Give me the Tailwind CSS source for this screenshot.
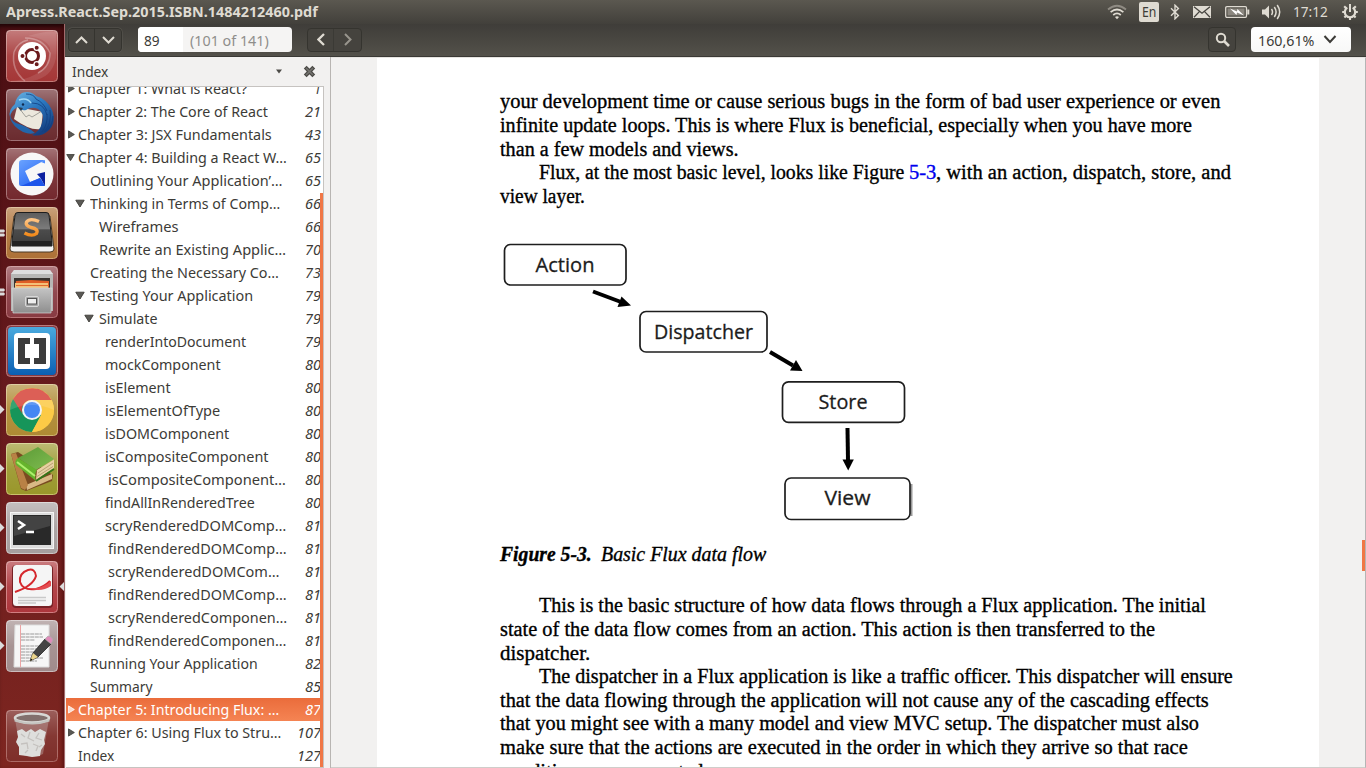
<!DOCTYPE html>
<html lang="en">
<head>
<meta charset="utf-8">
<title>Apress.React.Sep.2015.ISBN.1484212460.pdf</title>
<script src="https://cdn.jsdelivr.net/npm/@tailwindcss/browser@4"></script>
</head>
<body class="w-[1366px] h-[768px] overflow-hidden flex flex-col bg-[#f2f1f0] font-['Noto_Sans',sans-serif] text-[#3c3b37]">

<!-- top panel -->
<header class="h-[24px] shrink-0 flex items-center justify-between bg-linear-to-b from-[#5b5850] to-[#42403b] text-[#dfdbd2] pl-[6px] pr-[7px]">
  <div class="w-[320px] h-[24px] leading-[23px] text-[14px] font-bold whitespace-nowrap"><span class="inline-block origin-left" data-w="312">Apress.React.Sep.2015.ISBN.1484212460.pdf</span></div>
  <div class="flex items-center h-[24px]">
    <svg width="20" height="16" viewBox="0 0 20 16" fill="none" stroke="#dfdbd2" stroke-width="1.7"><path d="M1 5.5Q10-2 19 5.5" stroke="#8f8b83"/><path d="M3.6 8.2Q10 2.8 16.4 8.2"/><path d="M6.2 11Q10 7.6 13.8 11"/><path d="M8 13Q10 11.4 12 13L10 15.2Z" fill="#dfdbd2" stroke="none"/></svg>
    <div class="ml-[12px] w-[20px] h-[20px] rounded-[2px] bg-[#dfdbd2] text-[#3c3b37] text-[14px] leading-[20px] text-center flex justify-center"><span class="inline-block origin-center" data-w="14">En</span></div>
    <svg class="ml-[11px]" width="10" height="16" viewBox="0 0 10 16" fill="none" stroke="#dfdbd2" stroke-width="1.4"><path d="M1 4.2l7.4 7.2L5 14.8V1.2l3.4 3.4L1 11.8"/></svg>
    <svg class="ml-[13px]" width="18" height="12" viewBox="0 0 18 12"><path d="M0 0h18v12H0z" fill="#dfdbd2"/><path d="M1 .8l8 6.4 8-6.4M1 11.2l5.4-5.6M17 11.2l-5.4-5.6" fill="none" stroke="#45433e" stroke-width="1.3"/></svg>
    <svg class="ml-[14px]" width="25" height="12" viewBox="0 0 25 12"><rect x=".7" y=".7" width="20.8" height="10.6" rx="1.2" fill="none" stroke="#dfdbd2" stroke-width="1.3"/><rect x="2.5" y="2.5" width="17" height="7" fill="#8b877f"/><path d="M22.3 3.5h2v5h-2z" fill="#dfdbd2"/><path d="M5 2.5l7 3 .4-2.5L19 9.5l-7-3-.5 2.5z" fill="#fff"/></svg>
    <svg class="ml-[11px]" width="21" height="18" viewBox="0 0 21 18"><path d="M1 6.5h3l4-4v13l-4-4H1z" fill="#dfdbd2"/><path d="M10.5 6q2 3 0 6M13.3 4q3.6 5 0 10M16.2 2q5 7 0 14" fill="none" stroke="#dfdbd2" stroke-width="1.5"/></svg>
    <div class="ml-[11px] w-[36px] h-[24px] text-[14px] leading-[23px] whitespace-nowrap"><span class="inline-block origin-left" data-w="35">17:12</span></div>
    <svg class="ml-[12px]" width="18" height="18" viewBox="0 0 18 18" fill="none" stroke="#dfdbd2"><path d="M6.3 4.6a5.2 5.2 0 1 0 5.4 0" stroke-width="2.2"/><path d="M9 1v8" stroke-width="2"/><path d="M9 14v3M1.2 9h2.5M14.3 9h2.5M3.2 3.2l2 2M14.8 3.2l-2 2M3.4 14.6l2-2M14.6 14.6l-2-2" stroke-width="2.1"/></svg>
  </div>
</header>

<div class="flex h-[744px]">
  <!-- launcher -->
  <nav class="w-[65px] shrink-0 h-full flex flex-col gap-[7px] pt-[6px] pl-[6px] pb-[6px] border-r border-[#a36a6c] bg-linear-to-b from-[#4a0e12] via-[#671a1d] via-50% to-[#7e2620] shadow-[inset_-3px_0_4px_-2px_rgba(60,0,0,.55),inset_0_5px_5px_-3px_rgba(0,0,0,.7)]">
    <svg class="shrink-0" width="52" height="52" viewBox="0 0 52 52"><defs><linearGradient id="tile" x2="0" y2="1"><stop stop-color="#fff" stop-opacity=".38"/><stop offset=".5" stop-color="#fff" stop-opacity=".12"/><stop offset="1" stop-color="#fff" stop-opacity=".05"/></linearGradient></defs>
      <rect x=".5" y=".5" width="51" height="51" rx="4" fill="#a02c2c" stroke="#c07673"/><rect width="52" height="52" rx="4" fill="url(#tile)"/>
      <path d="M3 51Q18 51 30 44Q46 34 44 18Q40 8 22 6Q42 0 50 2V28Q46 48 26 51z" fill="#fff" opacity=".1"/><path d="M19 8q18 0 25 15q0 14-12 20M8 22q-3 18 11 29M8 22q4-10 14-12" fill="none" stroke="#fff" opacity=".3" stroke-width="1.5"/>
      <circle cx="26" cy="26" r="14" fill="#fff"/><circle cx="26" cy="26" r="6.5" fill="none" stroke="#6b1a1c" stroke-width="3"/><g stroke="#fff" stroke-width="1.2"><circle cx="16.500" cy="26" r="2.600" fill="#6b1a1c"/><circle cx="30.700" cy="17.800" r="2.600" fill="#6b1a1c"/><circle cx="30.700" cy="34.200" r="2.600" fill="#6b1a1c"/></g></svg>

    <svg class="shrink-0" width="52" height="52" viewBox="0 0 52 52"><defs><linearGradient id="bird" x2=".6" y2="1"><stop stop-color="#6eb8e6"/><stop offset=".5" stop-color="#2b78c0"/><stop offset="1" stop-color="#164182"/></linearGradient></defs>
      <rect x=".5" y=".5" width="51" height="51" rx="4" fill="#632024" stroke="#99686c"/><rect width="52" height="52" rx="4" fill="url(#tile)"/>
      <path d="M11 18L37 23L35 40Q24 42 8 30z" fill="#ece8dd"/><path d="M13 19l7 9 3-2 3 2 10-6" fill="none" stroke="#9b9a93" stroke-width=".9"/>
      <path d="M4 21Q3 31 10 34Q21 37 29 44Q24 46 17 43Q7 38 4 29z" fill="#2366ab"/>
      <path d="M16 4Q24 1 30 7Q41 10 46 21Q51 34 42 42Q35 48 26 46Q34 42 36 34Q39 24 32 20Q26 17 20 21Q15 22 12 18Q5 21 4 28Q2 21 9 15Q10 8 16 4z" fill="url(#bird)"/>
      <path d="M20 5q8 0 10 5q8 4 11 12M26 14q12 0 15 12M44 21q2 14-6 22M47 27q0 10-8 16M41 25q1 10-5 18" fill="none" stroke="#123f80" stroke-width=".8"/><path d="M13 11q8-3 12 3" fill="none" stroke="#a5daf5" stroke-width="1.500"/><circle cx="17" cy="15.500" r="1.200" fill="#10294f"/><path d="M12 18l3 4 2-3z" fill="#2b3f55"/></svg>

    <svg class="shrink-0" width="52" height="52" viewBox="0 0 52 52"><defs><linearGradient id="gb" x2=".7" y2="1"><stop stop-color="#6ba3ff"/><stop offset="1" stop-color="#2767f4"/></linearGradient></defs><rect x=".5" y=".5" width="51" height="51" rx="4" fill="#6c1d22" stroke="#a06a6d"/><rect width="52" height="52" rx="4" fill="url(#tile)"/><circle cx="26" cy="26" r="21.500" fill="#f7f7f7"/><path d="M16 12H39L19 23L24 34L34 30L39 38H15Q13 38 13 36V15Q13 12 16 12z" fill="url(#gb)"/><path d="M39 12v3.500L35 14z" fill="#4d8cff"/><path d="M31 26L39 24V38L34.500 30z" fill="#0b1f9f"/><path d="M15 38L34 30L39 38z" fill="#1d55ea"/></svg>

    <svg class="shrink-0" width="52" height="52" viewBox="0 0 52 52"><defs><linearGradient id="sb" x2="0" y2="1"><stop stop-color="#5c5c5c"/><stop offset=".48" stop-color="#7b7b7b"/><stop offset=".52" stop-color="#4c4c4c"/><stop offset="1" stop-color="#3b3b3b"/></linearGradient><linearGradient id="so" x2="0" y2="1"><stop stop-color="#ffc483"/><stop offset="1" stop-color="#f28a1b"/></linearGradient></defs><rect x=".5" y=".5" width="51" height="51" rx="4" fill="#a9692c" stroke="#cf9c68"/><rect width="52" height="52" rx="4" fill="url(#tile)"/><path d="M8 9L4 42Q4 45 8 45H44Q48 45 48 42L44 9z" fill="#f1f1f1" stroke="#4b3925"/><path d="M9 8Q9 5.500 12 5.500H40Q43 5.500 43 8L46 34V39H6V34z" fill="url(#sb)" stroke="#1d1d1d"/><path d="M6 34H46V39H6z" fill="#222"/><path d="M33 14.500Q24 10.500 20.500 15Q19 18.500 25 20.500Q33 22 30.500 26.500Q26 30 18.500 26" fill="none" stroke="url(#so)" stroke-width="3.400"/></svg>

    <svg class="shrink-0" width="52" height="52" viewBox="0 0 52 52"><defs><linearGradient id="cab" x2="0" y2="1"><stop stop-color="#c4c4c4"/><stop offset="1" stop-color="#8e8e8e"/></linearGradient></defs><rect x=".5" y=".5" width="51" height="51" rx="4" fill="#823038" stroke="#b3686c"/><rect width="52" height="52" rx="4" fill="url(#tile)"/><path d="M8 4H44L47 8V45H5V8z" fill="#b7b7b5"/><path d="M8 4H44L47 8H5z" fill="#dedede"/><path d="M8 12H44V22H8z" fill="#38332f"/><path d="M10 15l15-1 18 1v7H9z" fill="#df5d25"/><path d="M9 17h33v5H9z" fill="#f3c079"/><path d="M10 19h33v1H10z" fill="#e36a2c"/><path d="M6 22H46L45 47H7z" fill="url(#cab)" stroke="#d6d6d6" stroke-width=".7"/><rect x="19.500" y="30.500" width="13" height="10" rx="1.500" fill="#a5a5a5" stroke="#d8d8d8"/><rect x="21.500" y="32.500" width="9" height="5.500" fill="#eee" stroke="#555"/></svg>

    <svg class="shrink-0" width="52" height="52" viewBox="0 0 52 52"><defs><linearGradient id="br" x2="0" y2="1"><stop stop-color="#4aaade"/><stop offset="1" stop-color="#0b5fb3"/></linearGradient></defs><rect x=".5" y=".5" width="51" height="51" rx="4" fill="#8a3c44" stroke="#b87a7c"/><rect x="2" y="2" width="48" height="48" rx="4" fill="url(#br)"/><rect x="8" y="8" width="36" height="36" rx="4" fill="#fff"/><path d="M12 13h12v6h-5v14h5v6H12zM40 13H28v6h5v14h-5v6h12z" fill="#3c3c3c"/></svg>

    <svg class="shrink-0" width="52" height="52" viewBox="0 0 52 52"><rect x=".5" y=".5" width="51" height="51" rx="4" fill="#aa8328" stroke="#cdb06a"/><rect width="52" height="52" rx="4" fill="url(#tile)"/><circle cx="26" cy="26" r="22" fill="#fbc944"/><path d="M26 26L7 15A22 22 0 0 0 26 48L35 31z" fill="#16955a"/><path d="M7 15A22 22 0 0 1 45.500 16H26A10 10 0 0 0 16.500 30z" fill="#d7453b"/><path d="M26 48A22 22 0 0 0 45.500 16H26L35.500 31z" fill="#fcca46"/><circle cx="26" cy="26" r="10" fill="#f3f3f3"/><circle cx="26" cy="26" r="8" fill="#4587f3"/><path d="M4 26A22 22 0 0 1 48 26Q26 16 4 26" fill="#fff" opacity=".14"/></svg>

    <svg class="shrink-0" width="52" height="52" viewBox="0 0 52 52"><defs><linearGradient id="book" x2="1" y2="1"><stop stop-color="#5c9a36"/><stop offset="1" stop-color="#7fbc50"/></linearGradient></defs><rect x=".5" y=".5" width="51" height="51" rx="4" fill="#94911f" stroke="#c5bf62"/><rect width="52" height="52" rx="4" fill="url(#tile)"/><path d="M5 11L12 9L47 32L46 38L20 48L15 46z" fill="#7a4b21"/><path d="M20 42L46 31V36L21 47z" fill="#d9b985"/><path d="M5 11L10 10L22 42L19 47L15 45z" fill="#b98145"/><path d="M12 15L32 4L48 16L30 27z" fill="url(#book)"/><path d="M12 15Q8 18 10 22L30 38Q28 31 31 27z" fill="#65b32d"/><path d="M11 19l18 14" stroke="#aef06c" stroke-width="2.200"/><path d="M31 27L48 16.500V25L30 37z" fill="#e6d1a3"/><path d="M32 30l15-10M31 33.500l16-10" stroke="#ad9266" stroke-width=".8"/><path d="M30 38L48 26" stroke="#347719" stroke-width="1.800"/></svg>

    <svg class="shrink-0" width="52" height="52" viewBox="0 0 52 52"><rect x=".5" y=".5" width="51" height="51" rx="4" fill="#a19999" stroke="#c9c3c3"/><rect width="52" height="52" rx="4" fill="url(#tile)"/><rect x="4.500" y="10.500" width="43" height="36" fill="#ddd" stroke="#f5f5f5"/><rect x="7" y="13" width="38" height="30" fill="#292929"/><path d="M8 14H44V24L8 34z" fill="#555" opacity=".6"/><path d="M12 19l6 4-6 4M20 30h8" fill="none" stroke="#fff" stroke-width="2.500"/></svg>

    <svg class="shrink-0" width="52" height="52" viewBox="0 0 52 52"><rect x=".5" y=".5" width="51" height="51" rx="4" fill="#a92b31" stroke="#cf777a"/><rect width="52" height="52" rx="4" fill="url(#tile)"/><rect x="6" y="4" width="41" height="43" rx="4" fill="#772125"/><rect x="7" y="4" width="39" height="41" rx="3.500" fill="#f5f5f5"/><path d="M9 31Q27 25 30 15Q29 7 22 9Q13 12 14 21Q17 30 30 28Q38 26 44 20" fill="none" stroke="#d5282d" stroke-width="2"/><path d="M22 27Q35 29 45 20V25Q35 32 22 27" fill="#e44b50"/><path d="M12 36.500h28M12 39.500h28M12 42h18" stroke="#c9c9c9" stroke-width="1.300"/></svg>

    <svg class="shrink-0" width="52" height="52" viewBox="0 0 52 52"><rect x=".5" y=".5" width="51" height="51" rx="4" fill="#9b8585" stroke="#c8b9ba"/><rect width="52" height="52" rx="4" fill="url(#tile)"/><path d="M9 5H43V47H8z" fill="#f6f6f6" stroke="#ddd"/><path d="M14.500 5v42" stroke="#eca4a4"/><path d="M15 14h21M15 17h22M15 20h14M15 26h22M15 29h19M15 32h21M15 35h18M15 38h22M15 41h16" stroke="#9a9a9a" stroke-width="1" stroke-dasharray="4 .6"/><path d="M24 41L27 33L39 19L45 24L32 37z" fill="#444" stroke="#222" stroke-width=".8"/><path d="M24 41L27 33L32 37z" fill="#ead48b"/><path d="M39 19L42 16Q46 16 47 20L45 24z" fill="#df8cb9" stroke="#aaa" stroke-width=".7"/><path d="M24 41l1-2.500 1.500 1z" fill="#111"/></svg>

    <svg class="shrink-0 mt-auto" width="52" height="52" viewBox="0 0 52 52"><rect x=".5" y=".5" width="51" height="51" rx="4" fill="#792621" stroke="#a9645f"/><rect width="52" height="52" rx="4" fill="url(#tile)" opacity=".7"/><path d="M9 9L15 44Q26 50 37 44L43 9z" fill="#c5b4b1" opacity=".4"/><path d="M11 21l5-2 4 3 5-3 4 3 5-3 6 3-2 8 1 4-4 6-1 6-8 1-5-1-8-1 0-8-3-5 2-5z" fill="#dededc"/><path d="M15 24l4 3M24 22l-2 6 6 3M33 23l-3 5 6 2M15 34l6-1 1 6M27 34l5 2-2 5M36 35l-3 2M19 43l3-3" fill="none" stroke="#c4c1be" stroke-width="1.300"/><ellipse cx="26" cy="8" rx="17" ry="4.500" fill="#82706d" stroke="#d8d8d5" stroke-width="2.600"/><path d="M8.500 9q17 7 35 0v2.500q-17 6-35 0z" fill="#c4c4c0"/></svg>
  </nav>

  <main class="w-[1301px] flex flex-col">
    <!-- toolbar -->
    <div class="h-[33px] shrink-0 flex items-center pl-[3px] pr-[15px] pb-[1px] bg-linear-to-b from-[#3f3d39] to-[#53514a] border-b border-[#3a3935]">
      <div class="flex w-[54px] h-[24px] rounded-[4px] border border-[#35342f] bg-[#45433e] shadow-[0_0_0_.5px_#5b5952]">
        <div class="w-[26px] border-r border-[#35342f] flex items-center justify-center"><svg width="13" height="8" viewBox="0 0 13 8" fill="none" stroke="#dfdbd2" stroke-width="2"><path d="M1 7l5.500-5.500L12 7"/></svg></div>
        <div class="w-[26px] flex items-center justify-center"><svg width="13" height="8" viewBox="0 0 13 8" fill="none" stroke="#dfdbd2" stroke-width="2"><path d="M1 1l5.500 5.500L12 1"/></svg></div>
      </div>
      <div class="ml-[16px] w-[154px] h-[25px] rounded-[4px] bg-[#f5f4f3] flex overflow-hidden text-[14.5px] leading-[27px] whitespace-nowrap">
        <div class="w-[45px] pl-[6px] bg-white"><span class="inline-block origin-left" data-w="16">89</span></div>
        <div class="pl-[7px] text-[#8f8e8b]"><span class="inline-block origin-left" data-w="79">(101 of 141)</span></div>
      </div>
      <div class="ml-[15px] flex w-[55px] h-[24px] rounded-[4px] border border-[#35342f] bg-[#45433e]">
        <div class="w-[26px] border-r border-[#3b3a35] flex items-center justify-center"><svg width="8" height="13" viewBox="0 0 8 13" fill="none" stroke="#dfdbd2" stroke-width="2.300"><path d="M7 1L1.500 6.500 7 12"/></svg></div>
        <div class="w-[27px] flex items-center justify-center"><svg width="8" height="13" viewBox="0 0 8 13" fill="none" stroke="#98958d" stroke-width="2"><path d="M1 1l5.500 5.500L1 12"/></svg></div>
      </div>
      <div class="ml-auto w-[28px] h-[25px] rounded-[4px] border border-[#35342f] bg-[#45433e] flex items-center justify-center"><svg width="15" height="15" viewBox="0 0 15 15" fill="none" stroke="#dfdbd2"><circle cx="6" cy="6" r="4.200" stroke-width="2"/><path d="M9 9l5 5" stroke-width="2.600"/></svg></div>
      <div class="ml-[15px] w-[100px] h-[25px] rounded-[4px] bg-linear-to-b from-white to-[#f8f8f7] flex items-center pl-[7px] text-[14.5px] leading-[27px] whitespace-nowrap">
        <div class="w-[65px] h-[25px]"><span class="inline-block origin-left" data-w="56">160,61%</span></div>
        <svg width="14" height="9" viewBox="0 0 14 9" fill="none" stroke="#3c3b37" stroke-width="2"><path d="M1.500 1L7 7l5.500-6"/></svg>
      </div>
    </div>

    <div class="flex h-[711px] overflow-hidden">
      <!-- outline pane -->
      <aside class="w-[266px] shrink-0 border-r border-[#b8b5b2] flex flex-col pl-px pr-[7px]">
        <div class="h-[29px] shrink-0 flex items-center pl-[6px] pr-[7px] text-[14.5px] leading-[28px]">
          <div class="flex-1 h-[29px]"><span class="inline-block origin-left" data-w="36">Index</span></div>
          <svg width="6" height="5" viewBox="0 0 6 5"><path d="M0 .5h6L3 4.500z" fill="#4c4b47"/></svg>
          <svg class="ml-[21px]" width="13" height="13" viewBox="0 0 13 13"><path d="M2.200 2.200l8.600 8.600M10.800 2.200l-8.600 8.600" stroke="#4c4b47" stroke-width="4"/><path d="M3 3l7 7M10 3l-7 7" stroke="#74736f" stroke-width="1.500"/></svg>
        </div>
        <div class="relative w-[258px] h-[682px] bg-white border-t border-b border-r border-[#c6c3c0] overflow-hidden">
          <div id="outline" class="-mt-[10px] flex flex-col text-[14.5px]"></div>
          <div class="absolute right-0 top-[106px] w-[3px] h-[574px] bg-[#f07746]"></div>
        </div>
      </aside>

      <!-- page -->
      <section class="relative w-[1035px] pl-[46px] border-r border-b border-t border-r-[#b5b5b5] border-b-[#cfcdca] border-t-[#e6e4e1] overflow-hidden">
        <div class="w-[942px] h-[800px] bg-white pl-[123px] text-black font-['Liberation_Serif',serif] text-[20.5px] [-webkit-text-stroke:0.35px_black]">
          <div id="p1" class="pt-[31.400px] flex flex-col"></div>

          <!-- flow diagram -->
          <svg class="block mt-[0.600px] [-webkit-text-stroke:0px]" width="440" height="326" viewBox="500 208 440 326" font-family="Open Sans, Noto Sans, sans-serif" font-size="20" fill="#1c1c1c">
            <g fill="#fff" stroke="#1e1e1e" stroke-width="1.700"><path d="M911.500 484v32" stroke="#999" stroke-width="2"/><rect x="504.500" y="244.500" width="121.500" height="40.500" rx="6"/><rect x="640" y="311.500" width="127" height="40.500" rx="6"/><rect x="782.500" y="381.800" width="122" height="40.500" rx="6"/><rect x="785" y="478" width="125" height="41.500" rx="6"/></g>
            <g stroke="#000" stroke-width="4"><path d="M593 291.500L621 302"/><path d="M770 352L793 365.500"/><path d="M847.500 428L848 461"/></g>
            <g fill="#000"><path d="M631 305.500L617.500 307L621.500 296.500z"/><path d="M802.500 371L790 370.500L796 360z"/><path d="M848.200 470.500L842.500 459.500H853.800z"/></g>
            <g stroke="#1c1c1c" stroke-width=".3"><text x="535.500" y="271.500" textLength="59" lengthAdjust="spacingAndGlyphs">Action</text><text x="654" y="338.500" textLength="99" lengthAdjust="spacingAndGlyphs">Dispatcher</text><text x="818.500" y="408.700" textLength="49" lengthAdjust="spacingAndGlyphs">Store</text><text x="824.500" y="504.500" textLength="46" lengthAdjust="spacingAndGlyphs">View</text></g>
          </svg>

          <div class="h-[59.400px] leading-[40px] whitespace-nowrap italic flex"><div class="w-[101px]"><span class="inline-block origin-left font-bold" data-w="92">Figure 5-3.</span></div><span class="inline-block origin-left" data-w="165">Basic Flux data flow</span></div>
          <div id="p2" class="flex flex-col"></div>
        </div>
        <div class="absolute right-0 top-[482px] w-[3px] h-[31px] bg-[#f07746]"></div>
      </section>
    </div>
  </main>
</div>

<!-- running-application marks on the launcher edges -->
<svg class="absolute left-0 top-0 pointer-events-none" width="66" height="768" viewBox="0 0 66 768" fill="#dcdcdc"><path d="M0 229.500h4l1 1.500-1 1.500H0zM0 233.500h4l1 1.500-1 1.500H0zM0 288.500h4l1 1.500-1 1.500H0zM0 292.500h4l1 1.500-1 1.500H0z"/><path d="M0 405l4.500 4.500L0 414zM0 464l4.500 4.500L0 473zM0 523l4.500 4.500L0 532zM0 582l4.500 4.500L0 591zM0 641l4.500 4.500L0 650zM64 582l-4.500 4.500L64 591z"/></svg>

<script>
// [label, page, text x, label width, arrow: r = collapsed, d = expanded]
const rows = [
  ["Chapter 1: What is React?", 1, 78, 169, "r"],
  ["Chapter 2: The Core of React", 21, 78, 190, "r"],
  ["Chapter 3: JSX Fundamentals", 43, 78, 194, "r"],
  ["Chapter 4: Building a React W…", 65, 78, 209, "d"],
  ["Outlining Your Application’…", 65, 90, 193, ""],
  ["Thinking in Terms of Comp…", 66, 90, 190, "d"],
  ["Wireframes", 66, 99, 80, ""],
  ["Rewrite an Existing Applic…", 70, 99, 187, ""],
  ["Creating the Necessary Co…", 73, 90, 189, ""],
  ["Testing Your Application", 79, 90, 163, "d"],
  ["Simulate", 79, 99, 59, "d"],
  ["renderIntoDocument", 79, 105, 141, ""],
  ["mockComponent", 80, 105, 116, ""],
  ["isElement", 80, 105, 66, ""],
  ["isElementOfType", 80, 105, 115, ""],
  ["isDOMComponent", 80, 105, 124, ""],
  ["isCompositeComponent", 80, 105, 164, ""],
  ["isCompositeComponent…", 80, 108, 178, ""],
  ["findAllInRenderedTree", 80, 105, 150, ""],
  ["scryRenderedDOMComp…", 81, 105, 181, ""],
  ["findRenderedDOMComp…", 81, 108, 179, ""],
  ["scryRenderedDOMCom…", 81, 108, 171, ""],
  ["findRenderedDOMComp…", 81, 108, 179, ""],
  ["scryRenderedComponen…", 81, 108, 179, ""],
  ["findRenderedComponen…", 81, 108, 178, ""],
  ["Running Your Application", 82, 90, 168, ""],
  ["Summary", 85, 90, 63, ""],
  ["Chapter 5: Introducing Flux: …", 87, 78, 201, "r"],
  ["Chapter 6: Using Flux to Stru…", 107, 78, 203, "r"],
  ["Index", 127, 78, 36, ""],
];
document.getElementById("outline").innerHTML = rows.map(([t, p, x, w, a]) => {
  const sel = p === 87;
  const c = sel ? "#fbdccf" : "#5a5955";
  const edge = sel ? "#fff" : "#3c3b37";
  const path = a === "r" ? "M2.800 1.500v8l6.500-4z" : "M.8 2.200h8.400L5 9z";
  const arrow = a ? `<svg width="10" height="11" viewBox="0 0 10 11"><path d="${path}" fill="${c}" stroke="${edge}" stroke-width=".9"/></svg>` : "";
  return `<div class="h-[23px] shrink-0 flex leading-[22px] whitespace-nowrap ${sel ? "bg-linear-to-b from-[#ea6c3b] to-[#f58453] text-white" : ""}">
    <div class="shrink-0 flex items-center justify-end ${x === 78 ? "pr-[3px]" : "pr-[5px]"}" style="width:${x - 66}px">${arrow}</div>
    <div class="flex-1"><span class="inline-block origin-left" data-w="${w}">${t}</span></div>
    <div class="italic pr-[2px]"><span class="inline-block origin-right" data-w="${p > 99 ? 24 : p > 9 ? 16 : 7}">${p}</span></div></div>`;
}).join("");

// line: [text, width, indented]; a line may also be a list of [text, column width, is link] runs
const run = (t, w) => `<span class="inline-block origin-left" data-w="${w}">${t}</span>`;
const para = lines => lines.map(([t, w, ind]) =>
  `<div class="h-[23.6px] leading-[24px] whitespace-nowrap flex ${ind ? "pl-[39px]" : ""}">${
    Array.isArray(t)
      ? t.map(([s, cw, link]) => `<div class="shrink-0 ${link ? "text-[#0000ee] [-webkit-text-stroke:0.35px_#0000ee]" : ""}" style="width:${cw}px">${run(s, cw)}</div>`).join("")
      : run(t, w)}</div>`).join("");
document.getElementById("p1").innerHTML = para([
  ["your development time or cause serious bugs in the form of bad user experience or even", 720],
  ["infinite update loops. This is where Flux is beneficial, especially when you have more", 692],
  ["than a few models and views.", 239],
  [[["Flux, at the most basic level, looks like Figure&nbsp;", 370], ["5-3", 27, 1], [", with an action, dispatch, store, and", 295]], 0, 1],
  ["view layer.", 85],
]);
document.getElementById("p2").innerHTML = para([
  ["This is the basic structure of how data flows through a Flux application. The initial", 667, 1],
  ["state of the data flow comes from an action. This action is then transferred to the", 655],
  ["dispatcher.", 90],
  ["The dispatcher in a Flux application is like a traffic officer. This dispatcher will ensure", 694, 1],
  ["that the data flowing through the application will not cause any of the cascading effects", 709],
  ["that you might see with a many model and view MVC setup. The dispatcher must also", 699],
  ["make sure that the actions are executed in the order in which they arrive so that race", 688],
  ["conditions are prevented.", 209],
]);

// stretch each label to its column width, once styles and fonts are settled
const fit = () => document.querySelectorAll("[data-w]").forEach(el => {
  el.style.transform = `scaleX(${el.dataset.w / el.offsetWidth})`;
});
fit();
addEventListener("load", fit);
document.fonts.ready.then(fit);
document.querySelectorAll("[data-w]").forEach(el => new ResizeObserver(fit).observe(el));
</script>
</body>
</html>
